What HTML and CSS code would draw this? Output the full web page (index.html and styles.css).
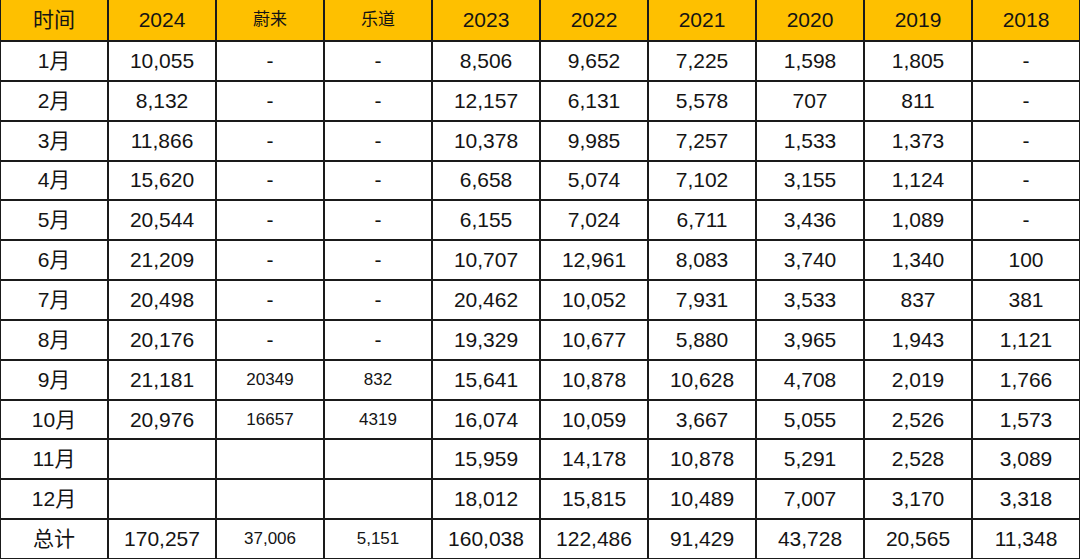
FILE: index.html
```html
<!DOCTYPE html>
<html lang="zh">
<head>
<meta charset="utf-8">
<link rel="stylesheet" href="styles.css">
</head>
<body>
<table class="sales">
<colgroup>
<col class="c1"><col class="c2"><col class="c3"><col class="c4"><col class="c5"><col class="c6"><col class="c7"><col class="c8"><col class="c9"><col class="c10">
</colgroup>
<thead>
<tr><th>时间</th><th>2024</th><th class="sm">蔚来</th><th class="sm">乐道</th><th>2023</th><th>2022</th><th>2021</th><th>2020</th><th>2019</th><th>2018</th></tr>
</thead>
<tbody>
<tr><td>1月</td><td>10,055</td><td>-</td><td>-</td><td>8,506</td><td>9,652</td><td>7,225</td><td>1,598</td><td>1,805</td><td>-</td></tr>
<tr><td>2月</td><td>8,132</td><td>-</td><td>-</td><td>12,157</td><td>6,131</td><td>5,578</td><td>707</td><td>811</td><td>-</td></tr>
<tr><td>3月</td><td>11,866</td><td>-</td><td>-</td><td>10,378</td><td>9,985</td><td>7,257</td><td>1,533</td><td>1,373</td><td>-</td></tr>
<tr><td>4月</td><td>15,620</td><td>-</td><td>-</td><td>6,658</td><td>5,074</td><td>7,102</td><td>3,155</td><td>1,124</td><td>-</td></tr>
<tr><td>5月</td><td>20,544</td><td>-</td><td>-</td><td>6,155</td><td>7,024</td><td>6,711</td><td>3,436</td><td>1,089</td><td>-</td></tr>
<tr><td>6月</td><td>21,209</td><td>-</td><td>-</td><td>10,707</td><td>12,961</td><td>8,083</td><td>3,740</td><td>1,340</td><td>100</td></tr>
<tr><td>7月</td><td>20,498</td><td>-</td><td>-</td><td>20,462</td><td>10,052</td><td>7,931</td><td>3,533</td><td>837</td><td>381</td></tr>
<tr><td>8月</td><td>20,176</td><td>-</td><td>-</td><td>19,329</td><td>10,677</td><td>5,880</td><td>3,965</td><td>1,943</td><td>1,121</td></tr>
<tr><td>9月</td><td>21,181</td><td class="sm">20349</td><td class="sm">832</td><td>15,641</td><td>10,878</td><td>10,628</td><td>4,708</td><td>2,019</td><td>1,766</td></tr>
<tr><td>10月</td><td>20,976</td><td class="sm">16657</td><td class="sm">4319</td><td>16,074</td><td>10,059</td><td>3,667</td><td>5,055</td><td>2,526</td><td>1,573</td></tr>
<tr><td>11月</td><td></td><td></td><td></td><td>15,959</td><td>14,178</td><td>10,878</td><td>5,291</td><td>2,528</td><td>3,089</td></tr>
<tr><td>12月</td><td></td><td></td><td></td><td>18,012</td><td>15,815</td><td>10,489</td><td>7,007</td><td>3,170</td><td>3,318</td></tr>
<tr><td>总计</td><td>170,257</td><td class="sm">37,006</td><td class="sm">5,151</td><td>160,038</td><td>122,486</td><td>91,429</td><td>43,728</td><td>20,565</td><td>11,348</td></tr>
</tbody>
</table>
</body>
</html>
```

FILE: styles.css
```css
html, body {
  margin: 0;
  padding: 0;
  background: #ffffff;
}
.sales {
  border-collapse: collapse;
  table-layout: fixed;
  width: 1080px;
  margin-left: -1px;
  font-family: "Liberation Sans", Arial, "Noto Sans CJK SC", sans-serif;
  color: #141414;
}
.sales col { width: 108px; }
.sales th, .sales td {
  border: 2px solid #1a1a1a;
  text-align: center;
  vertical-align: middle;
  padding: 0;
  height: 37.85px;
  font-size: 21px;
  font-weight: normal;
  line-height: 24px;
}
.sales thead th {
  background: #fec000;
  border-top: none;
  height: 40px;
}
.sales .sm {
  font-size: 17px;
}
```
